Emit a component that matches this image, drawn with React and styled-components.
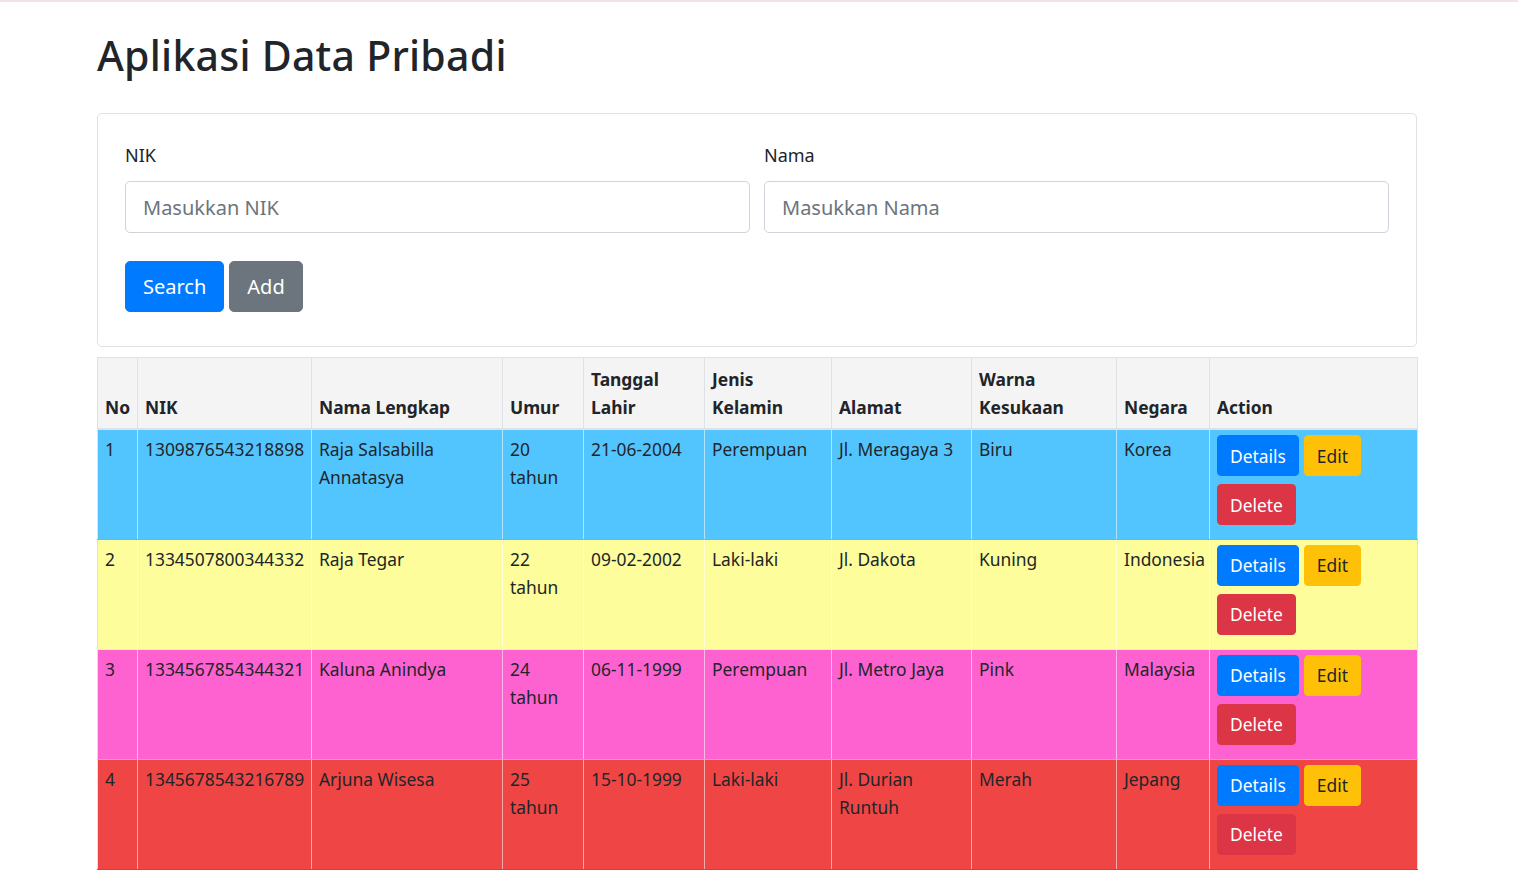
import styled, { createGlobalStyle } from "styled-components";

const GlobalStyle = createGlobalStyle`
  body {
    margin: 0;
    font-family: "Noto Sans", "Open Sans", Arial, sans-serif;
    color: #212529;
    background: #fff;
    border-top: 2px solid #f1e3e9;
  }
  * {
    box-sizing: border-box;
  }
`;

const rows = [
  {
    no: 1,
    nik: "1309876543218898",
    nama: "Raja Salsabilla Annatasya",
    umur: "20 tahun",
    lahir: "21-06-2004",
    jk: "Perempuan",
    alamat: "Jl. Meragaya 3",
    warna: "Biru",
    negara: "Korea",
    bg: "#52c5fe",
    line: "#2fd1ff",
  },
  {
    no: 2,
    nik: "1334507800344332",
    nama: "Raja Tegar",
    umur: "22 tahun",
    lahir: "09-02-2002",
    jk: "Laki-laki",
    alamat: "Jl. Dakota",
    warna: "Kuning",
    negara: "Indonesia",
    bg: "#fdfd9b",
    line: "#ececd0",
  },
  {
    no: 3,
    nik: "1334567854344321",
    nama: "Kaluna Anindya",
    umur: "24 tahun",
    lahir: "06-11-1999",
    jk: "Perempuan",
    alamat: "Jl. Metro Jaya",
    warna: "Pink",
    negara: "Malaysia",
    bg: "#fe62d0",
    line: "#ff8fe2",
  },
  {
    no: 4,
    nik: "1345678543216789",
    nama: "Arjuna Wisesa",
    umur: "25 tahun",
    lahir: "15-10-1999",
    jk: "Laki-laki",
    alamat: "Jl. Durian Runtuh",
    warna: "Merah",
    negara: "Jepang",
    bg: "#f04545",
    line: "#ff2a2a",
  },
];

const columns = [
  { label: "No", width: 40 },
  { label: "NIK", width: 174 },
  { label: "Nama Lengkap", width: 191 },
  { label: "Umur", width: 81 },
  { label: "Tanggal Lahir", width: 121 },
  { label: "Jenis Kelamin", width: 127 },
  { label: "Alamat", width: 140 },
  { label: "Warna Kesukaan", width: 145 },
  { label: "Negara", width: 93 },
  { label: "Action", width: 208 },
];

const App = () => {
  return (
    <Container>
      <GlobalStyle />
      <Title>Aplikasi Data Pribadi</Title>
      <Card>
        <FieldRow>
          <Field>
            <Label>NIK</Label>
            <Input placeholder="Masukkan NIK" />
          </Field>
          <Field>
            <Label>Nama</Label>
            <Input placeholder="Masukkan Nama" />
          </Field>
        </FieldRow>
        <ButtonRow>
          <BigButton $bg="#007bff">Search</BigButton>
          <BigButton $bg="#6c757d">Add</BigButton>
        </ButtonRow>
      </Card>
      <Table>
        <colgroup>
          {columns.map((c) => (
            <col key={c.label} style={{ width: c.width }} />
          ))}
        </colgroup>
        <thead>
          <tr>
            {columns.map((c) => (
              <Th key={c.label}>{c.label}</Th>
            ))}
          </tr>
        </thead>
        <tbody>
          {rows.map((r) => (
            <Row key={r.no} $bg={r.bg} $line={r.line}>
              <Td>{r.no}</Td>
              <Td>{r.nik}</Td>
              <Td>{r.nama}</Td>
              <Td>{r.umur}</Td>
              <Td>{r.lahir}</Td>
              <Td>{r.jk}</Td>
              <Td>{r.alamat}</Td>
              <Td>{r.warna}</Td>
              <Td>{r.negara}</Td>
              <Td>
                <Actions>
                  <SmallButton $bg="#007bff">Details</SmallButton>
                  <SmallButton $bg="#ffc107" $color="#212529">
                    Edit
                  </SmallButton>
                  <SmallButton $bg="#dc3545">Delete</SmallButton>
                </Actions>
              </Td>
            </Row>
          ))}
        </tbody>
      </Table>
    </Container>
  );
};

const Container = styled.div`
  width: 1320px;
  margin-left: 97px;
  padding-top: 26px;
`;

const Title = styled.h1`
  margin: 0 0 31px;
  font-size: 41px;
  font-weight: 500;
  letter-spacing: 0.25px;
  line-height: 54px;
  color: #212529;
`;

const Card = styled.div`
  border: 1px solid #dfe2e6;
  border-radius: 5px;
  padding: 28px 27px 34px;
`;

const FieldRow = styled.div`
  display: grid;
  grid-template-columns: 1fr 1fr;
  gap: 14px;
`;

const Field = styled.div`
  display: flex;
  flex-direction: column;
`;

const Label = styled.label`
  font-size: 18px;
  line-height: 27px;
  margin-bottom: 12px;
  color: #212529;
`;

const Input = styled.input`
  height: 52px;
  padding: 0 17px;
  font-family: inherit;
  font-size: 20px;
  color: #495057;
  border: 1px solid #ced4da;
  border-radius: 5px;
  outline: none;
  &::placeholder {
    color: #6c757d;
  }
`;

const ButtonRow = styled.div`
  display: flex;
  gap: 5px;
  margin-top: 28px;
`;

const BigButton = styled.button`
  height: 51px;
  padding: 0 17px;
  font-family: inherit;
  font-size: 20px;
  color: #fff;
  background: ${(p) => p.$bg};
  border: 1px solid ${(p) => p.$bg};
  border-radius: 5px;
`;

const Table = styled.table`
  width: 1320px;
  margin-top: 10px;
  table-layout: fixed;
  border-collapse: collapse;
  font-size: 17.4px;
  line-height: 28px;
`;

const Th = styled.th`
  text-align: left;
  vertical-align: bottom;
  font-weight: 700;
  padding: 7px 7px 7px;
  background: #f4f4f4;
  border: 1px solid #dee2e6;
  border-bottom-width: 2px;
`;

const Row = styled.tr`
  background: ${(p) => p.$bg};
  & > td {
    border-bottom: 1px solid ${(p) => p.$line};
    border-left: 1px solid rgba(255, 255, 255, 0.55);
    border-right: 1px solid rgba(255, 255, 255, 0.55);
  }
  & > td:first-child {
    border-left-color: #dee2e6;
  }
  & > td:last-child {
    border-right-color: #dee2e6;
  }
`;

const Td = styled.td`
  vertical-align: top;
  padding: 5px 7px 5px;
  height: 110px;
`;

const Actions = styled.div`
  display: flex;
  flex-wrap: wrap;
  column-gap: 5px;
  row-gap: 8px;
  padding-bottom: 8px;
`;

const SmallButton = styled.button`
  height: 41px;
  padding: 0 12px;
  font-family: inherit;
  font-size: 17.4px;
  color: ${(p) => p.$color || "#fff"};
  background: ${(p) => p.$bg};
  border: 1px solid ${(p) => p.$bg};
  border-radius: 4px;
`;

export default App;
